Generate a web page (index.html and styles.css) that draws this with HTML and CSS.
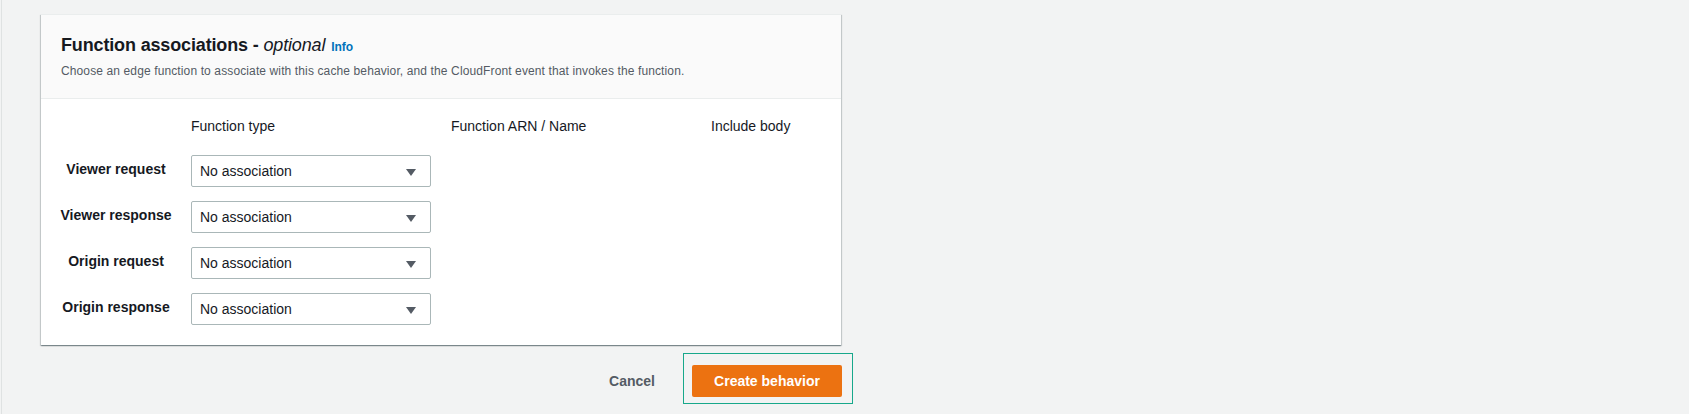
FILE: index.html
```html
<!DOCTYPE html>
<html lang="en">
<head>
<meta charset="utf-8">
<title>Function associations</title>
<link rel="stylesheet" href="styles.css">
</head>
<body>
<div class="page">
  <section class="card">
    <header class="card-header">
      <h2 class="card-title">Function associations - <em>optional</em> <a class="info" href="#">Info</a></h2>
      <p class="card-desc">Choose an edge function to associate with this cache behavior, and the CloudFront event that invokes the function.</p>
    </header>
    <div class="card-body">
      <div class="assoc-grid">
        <div></div>
        <div class="col-head">Function type</div>
        <div class="col-head">Function ARN / Name</div>
        <div class="col-head">Include body</div>

        <div class="row-label">Viewer request</div>
        <div class="select"><span>No association</span><svg class="caret" width="10" height="7" viewBox="0 0 10 7"><polygon points="0,0 10,0 5,7" fill="#545b64"/></svg></div>
        <div></div><div></div>

        <div class="row-label">Viewer response</div>
        <div class="select"><span>No association</span><svg class="caret" width="10" height="7" viewBox="0 0 10 7"><polygon points="0,0 10,0 5,7" fill="#545b64"/></svg></div>
        <div></div><div></div>

        <div class="row-label">Origin request</div>
        <div class="select"><span>No association</span><svg class="caret" width="10" height="7" viewBox="0 0 10 7"><polygon points="0,0 10,0 5,7" fill="#545b64"/></svg></div>
        <div></div><div></div>

        <div class="row-label">Origin response</div>
        <div class="select"><span>No association</span><svg class="caret" width="10" height="7" viewBox="0 0 10 7"><polygon points="0,0 10,0 5,7" fill="#545b64"/></svg></div>
        <div></div><div></div>
      </div>
    </div>
  </section>
  <div class="actions">
    <button class="btn-link" type="button">Cancel</button>
    <button class="btn-primary" type="button">Create behavior</button>
  </div>
</div>
</body>
</html>
```

FILE: styles.css
```css
html, body {
  margin: 0;
  padding: 0;
  height: 100%;
  overflow: hidden;
}

body {
  background: #f2f3f3;
  font-family: "Liberation Sans", Arial, sans-serif;
  color: #16191f;
}

.page {
  margin-left: 1px;
  border-left: 1px solid #dfe2e2;
  padding: 14px 0 0 39px;
  height: 400px;
}

.card {
  width: 800px;
  background: #ffffff;
  border-top: 1px solid #eaeded;
  box-shadow: 0 1px 1px 0 rgba(0, 28, 36, 0.3),
              1px 1px 1px 0 rgba(0, 28, 36, 0.15),
              -1px 1px 1px 0 rgba(0, 28, 36, 0.15);
}

.card-header {
  background: #fafafa;
  border-bottom: 1px solid #eaeded;
  padding: 19px 20px 19px 20px;
}

.card-title {
  margin: 0;
  font-size: 18px;
  line-height: 22px;
  font-weight: 700;
  letter-spacing: -0.15px;
  color: #16191f;
}

.card-title em {
  font-style: italic;
  font-weight: 400;
}

.info {
  font-size: 12px;
  font-weight: 700;
  letter-spacing: 0;
  color: #0073bb;
  text-decoration: none;
  margin-left: 1px;
}

.card-desc {
  margin: 5px 0 0 0;
  font-size: 12px;
  line-height: 16px;
  letter-spacing: 0.12px;
  color: #545b64;
}

.card-body {
  padding: 17px 0 20px 0;
}

.assoc-grid {
  display: grid;
  grid-template-columns: 150px 260px 260px 1fr;
  grid-template-rows: 25px repeat(4, 32px);
  row-gap: 14px;
}

.col-head {
  font-size: 14px;
  line-height: 20px;
  color: #16191f;
}

.row-label {
  font-size: 14px;
  font-weight: 700;
  line-height: 20px;
  text-align: center;
  align-self: center;
  padding-bottom: 4px;
  color: #16191f;
}

.select {
  width: 240px;
  height: 32px;
  box-sizing: border-box;
  border: 1px solid #aab7b8;
  border-radius: 2px;
  background: #ffffff;
  display: flex;
  align-items: center;
  justify-content: space-between;
  padding: 0 14px 0 8px;
  font-size: 14px;
  color: #16191f;
}

.caret {
  display: block;
  margin-top: 2px;
}

.actions {
  width: 801px;
  margin-top: 20px;
  display: flex;
  justify-content: flex-end;
  align-items: center;
}

.btn-link {
  background: none;
  border: none;
  padding: 4px 20px;
  margin-right: 17px;
  font-family: inherit;
  font-size: 14px;
  font-weight: 700;
  color: #545b64;
  cursor: pointer;
}

.btn-primary {
  position: relative;
  width: 150px;
  height: 32px;
  background: #ec7211;
  border: none;
  border-radius: 2px;
  font-family: inherit;
  font-size: 14px;
  font-weight: 700;
  color: #ffffff;
  cursor: pointer;
}

.btn-primary::after {
  content: "";
  position: absolute;
  top: -12px;
  right: -11px;
  bottom: -7px;
  left: -9px;
  border: 1px solid #17a88b;
}
```
